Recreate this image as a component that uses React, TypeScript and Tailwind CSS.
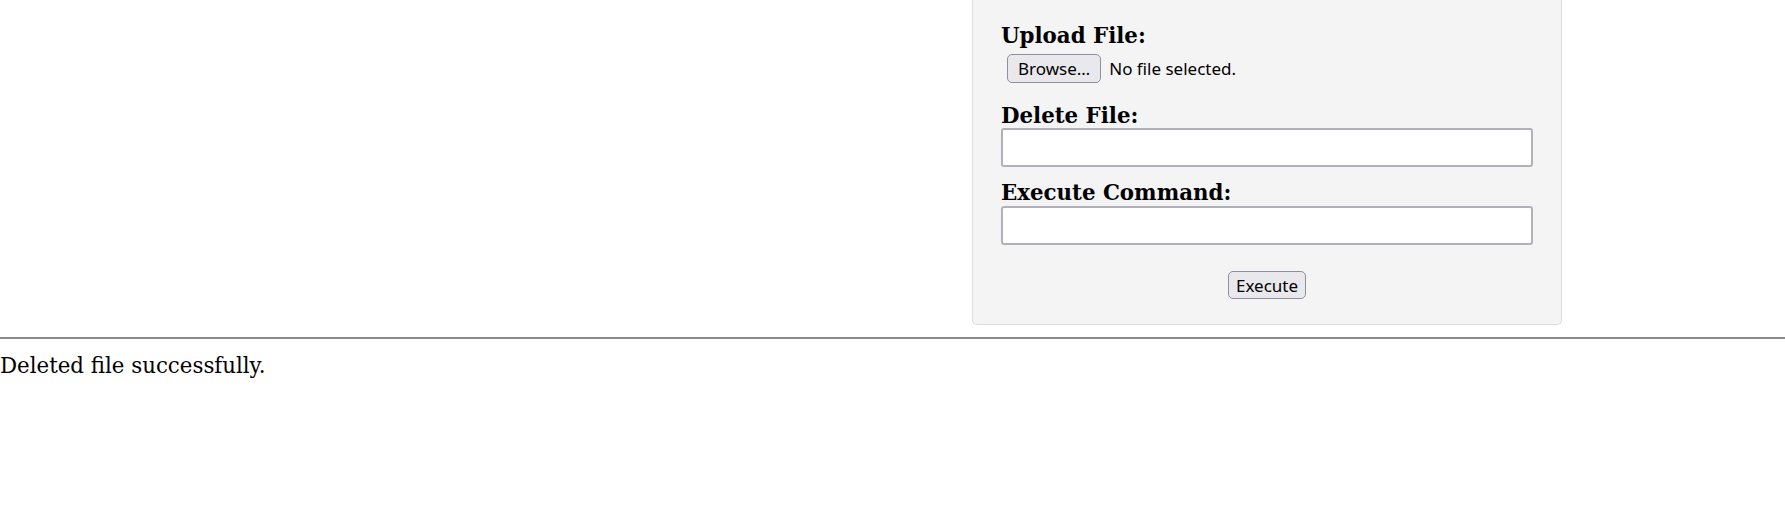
import React from "react"

const serif = { fontFamily: '"DejaVu Serif", serif' }
const sans = { fontFamily: '"Noto Sans", sans-serif' }

function Label({ children }: { children: React.ReactNode }) {
  return (
    <label className="block text-[21.33px] leading-[25px] font-bold text-black">
      {children}
    </label>
  )
}

function TextInput() {
  return (
    <input
      type="text"
      className="block h-[39px] w-full rounded-[3px] border-2 border-[#b1b1b9] bg-white px-2 outline-none"
    />
  )
}

function NativeButton({ children, className = "" }: { children: React.ReactNode; className?: string }) {
  return (
    <button
      type="button"
      className={`rounded-[5px] border border-[#8f8f9d] bg-[#e9e9ed] text-[17px] leading-none text-black ${className}`}
      style={sans}
    >
      {children}
    </button>
  )
}

export default function App() {
  return (
    <div className="min-h-screen bg-white text-black" style={serif}>
      <div className="ml-[972px] w-[590px] rounded-b-[5px] border border-t-0 border-[#dcdcdc] bg-[#f4f4f4] px-[28px] pt-[23px] pb-[25px]">
        <Label>Upload File:</Label>
        <div className="mt-[6px] flex items-center gap-[8px] pl-[6px]">
          <NativeButton className="h-[29px] px-[10px]">Browse…</NativeButton>
          <span className="text-[17px]" style={sans}>
            No file selected.
          </span>
        </div>

        <div className="mt-[20px]">
          <Label>Delete File:</Label>
          <TextInput />
        </div>

        <div className="mt-[13px]">
          <Label>Execute Command:</Label>
          <div className="mt-[1px]">
            <TextInput />
          </div>
        </div>

        <div className="mt-[26px] flex justify-center">
          <NativeButton className="h-[28px] px-[7px]">Execute</NativeButton>
        </div>
      </div>

      <hr className="mt-[12px] border-t-2 border-[#8a8a8a]" />

      <p className="mt-[14px] text-[21.33px] leading-[25px]">Deleted file successfully.</p>
    </div>
  )
}
